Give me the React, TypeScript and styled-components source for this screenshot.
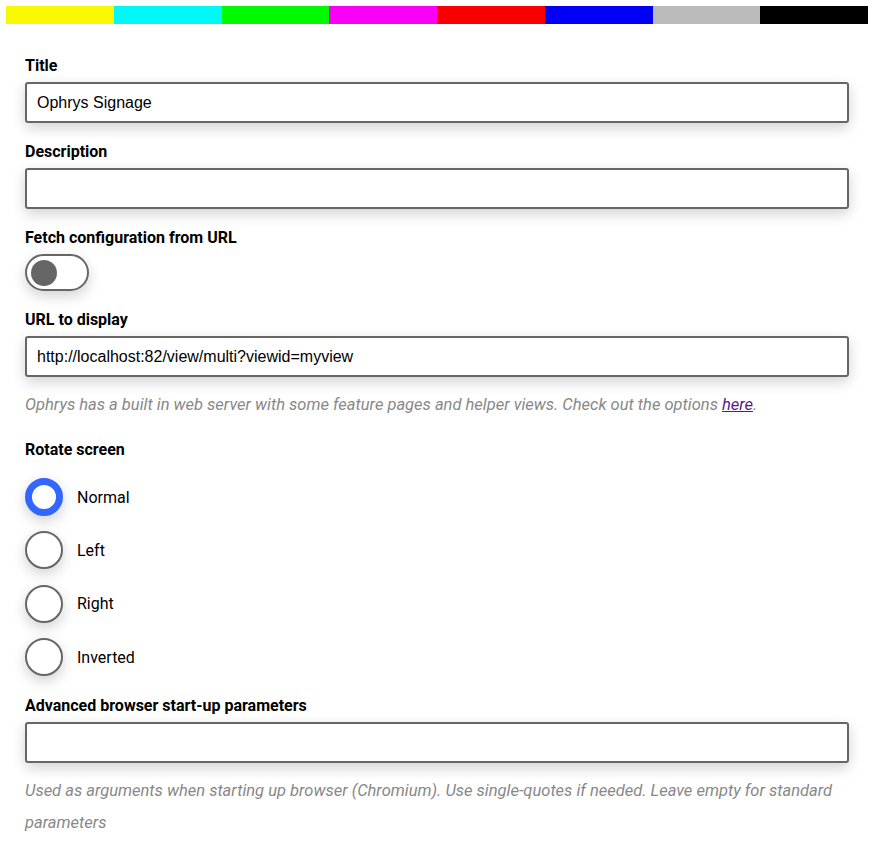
import React from 'react';
import styled, { createGlobalStyle } from 'styled-components';

const GlobalStyle = createGlobalStyle`
  body {
    margin: 0;
    background: #fff;
    font-family: Roboto, "Liberation Sans", sans-serif;
    color: #000;
  }
`;

const Page = styled.div`
  padding: 6px 6px 20px;
`;

const ColorBar = styled.div`
  display: flex;
  height: 18px;
`;

const Swatch = styled.div<{ $color: string }>`
  flex: 1;
  background: ${p => p.$color};
`;

const Form = styled.form`
  padding: 32px 19px 0;
  display: flex;
  flex-direction: column;
`;

const Field = styled.div`
  display: flex;
  flex-direction: column;
  gap: 7px;
  margin-bottom: 19px;
`;

const Label = styled.label`
  font-size: 16px;
  font-weight: 700;
  line-height: 19px;
`;

const TextInput = styled.input`
  box-sizing: border-box;
  height: 41px;
  width: 100%;
  border: 2px solid #666;
  border-radius: 3px;
  padding: 0 10px;
  font: 16px "Liberation Sans", Arial, sans-serif;
  color: #000;
  background: #fff;
  box-shadow: 0 5px 14px rgba(0, 0, 0, 0.18);
  outline: none;
`;

const Hint = styled.p`
  margin: 5px 0 0;
  font-size: 16.5px;
  font-style: italic;
  line-height: 32px;
  color: #888;

  a {
    color: #551a8b;
  }
`;

const Toggle = styled.div`
  box-sizing: border-box;
  width: 64px;
  height: 37px;
  border: 2px solid #666;
  border-radius: 19px;
  display: flex;
  align-items: center;
  padding-left: 4px;
  box-shadow: 0 5px 14px rgba(0, 0, 0, 0.18);
`;

const Knob = styled.div`
  width: 26px;
  height: 26px;
  border-radius: 50%;
  background: #666;
`;

const RadioList = styled.div`
  display: flex;
  flex-direction: column;
  gap: 15.4px;
  margin-top: 12px;
  margin-bottom: 1px;
`;

const RadioRow = styled.div`
  display: flex;
  align-items: center;
  gap: 14px;
  font-size: 16px;
`;

const RadioCircle = styled.div<{ $checked: boolean }>`
  box-sizing: border-box;
  width: 38px;
  height: 38px;
  border-radius: 50%;
  background: #fff;
  border: ${p => (p.$checked ? '7px solid #3366ff' : '2px solid #666')};
  box-shadow: 0 5px 14px rgba(0, 0, 0, 0.18);
`;

const colors = ['#f8f800', '#00f8f8', '#00f800', '#f800f8', '#f80000', '#0000f8', '#bbbbbb', '#000000'];
const rotations = ['Normal', 'Left', 'Right', 'Inverted'];

const App = () => {
    return (
        <Page>
            <GlobalStyle/>
            <ColorBar>
                {colors.map(c => <Swatch key={c} $color={c}/>)}
            </ColorBar>
            <Form>
                <Field>
                    <Label>Title</Label>
                    <TextInput defaultValue="Ophrys Signage"/>
                </Field>
                <Field>
                    <Label>Description</Label>
                    <TextInput/>
                </Field>
                <Field>
                    <Label>Fetch configuration from URL</Label>
                    <Toggle><Knob/></Toggle>
                </Field>
                <Field>
                    <Label>URL to display</Label>
                    <TextInput defaultValue="http://localhost:82/view/multi?viewid=myview"/>
                    <Hint>Ophrys has a built in web server with some feature pages and helper views. Check out the
                        options <a href="#">here</a>.</Hint>
                </Field>
                <Field>
                    <Label>Rotate screen</Label>
                    <RadioList>
                        {rotations.map((r, i) => (
                            <RadioRow key={r}>
                                <RadioCircle $checked={i === 0}/>
                                {r}
                            </RadioRow>
                        ))}
                    </RadioList>
                </Field>
                <Field>
                    <Label>Advanced browser start-up parameters</Label>
                    <TextInput/>
                    <Hint>Used as arguments when starting up browser (Chromium). Use single-quotes if needed. Leave
                        empty for standard parameters</Hint>
                </Field>
            </Form>
        </Page>
    );
};

export default App;
